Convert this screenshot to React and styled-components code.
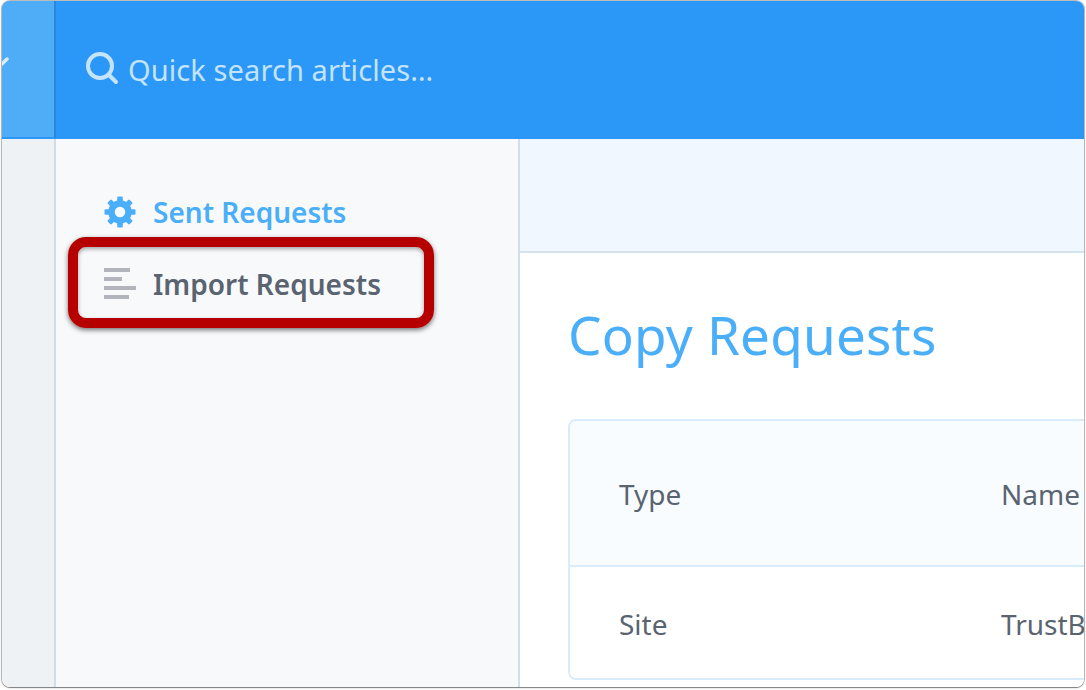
import React from "react";
import styled, { createGlobalStyle } from "styled-components";

const Global = createGlobalStyle`
  html, body { margin: 0; padding: 0; background: #ffffff; }
  body { font-family: "Noto Sans", "Open Sans", sans-serif; }
`;

const Page = styled.div`
  width: 1086px;
  height: 690px;
  padding: 1px 2px 3px 2px;
  box-sizing: border-box;
  overflow: hidden;
`;

const Window = styled.div`
  position: relative;
  height: 686px;
  border-radius: 8px;
  overflow: hidden;
  display: flex;
  flex-direction: column;
  background: #fff;
  box-shadow: 0 0 1px 1px rgba(90, 90, 90, 0.45), 0 1px 1px rgba(60, 60, 60, 0.5);
`;

const Header = styled.header`
  height: 138px;
  flex: none;
  display: flex;
  background: #2b97f6;
`;

const HeaderRail = styled.div`
  flex: none;
  width: 54px;
  box-sizing: border-box;
  background: #4facf7;
  border-right: 2px solid #2a88dc;
  border-bottom: 2px solid #2b97f6;
  overflow: hidden;
  display: flex;
  align-items: flex-start;
`;

const Chevron = styled.svg`
  margin-top: 51px;
  width: 10px;
  height: 16px;
`;

const Search = styled.div`
  display: flex;
  align-items: center;
  padding: 0 0 2px 29px;
  box-sizing: border-box;
  gap: 9px;
  height: 100%;
  color: #c4e3fd;
  font-size: 29px;
  letter-spacing: 0.1px;
  white-space: nowrap;
`;

const Body = styled.div`
  flex: 1;
  min-height: 0;
  display: flex;
`;

const Rail = styled.div`
  width: 54px;
  flex: none;
  box-sizing: border-box;
  background: #eef2f5;
  border-right: 2px solid #d3dde5;
`;

const Sidebar = styled.nav`
  width: 464px;
  flex: none;
  box-sizing: border-box;
  background: #f8f9fb;
  border-right: 2px solid #d3dfe8;
  padding: 51px 0 0 48px;
  display: flex;
  flex-direction: column;
  gap: 28px;
`;

const NavItem = styled.div`
  display: flex;
  align-items: center;
  height: 44px;
  gap: 17px;
  font-size: 28px;
  font-weight: 600;
  color: ${(p) => (p.$active ? "#4aaef8" : "#5a6470")};
`;

const Main = styled.main`
  flex: 1;
  min-width: 0;
  display: flex;
  flex-direction: column;
  background: #fff;
`;

const Band = styled.div`
  height: 114px;
  flex: none;
  box-sizing: border-box;
  background: #f0f7fe;
  border-bottom: 2px solid #d3e4f0;
`;

const Content = styled.div`
  padding: 49px 0 0 48px;
`;

const Title = styled.h1`
  margin: 0;
  height: 117px;
  font-size: 53px;
  line-height: 66px;
  font-weight: 400;
  letter-spacing: 0.2px;
  color: #4aaef8;
  white-space: nowrap;
`;

const Table = styled.div`
  width: 600px;
  height: 261px;
  box-sizing: border-box;
  border: 2px solid #d9ecfb;
  border-radius: 8px;
  overflow: hidden;
`;

const Row = styled.div`
  height: ${(p) => p.$height}px;
  box-sizing: border-box;
  display: grid;
  grid-template-columns: 382px 1fr;
  align-items: center;
  padding: ${(p) => (p.$head ? "2px" : "0")} 0 0 49px;
  background: ${(p) => (p.$head ? "#f9fcff" : "#fff")};
  border-bottom: ${(p) => (p.$head ? "2px solid #d9ecfb" : "none")};
  font-size: 28px;
  color: #5a6470;
  white-space: nowrap;
`;

const Callout = styled.div`
  position: absolute;
  left: 66px;
  top: 236px;
  width: 366px;
  height: 91px;
  box-sizing: border-box;
  border: 10px solid #b60000;
  border-radius: 18px;
  box-shadow: 0 2px 5px rgba(0, 0, 0, 0.55), inset 0 2px 4px rgba(0, 0, 0, 0.35);
`;

const Icon = styled.svg`
  flex: none;
  display: block;
`;

const TEETH = [0, 45, 90, 135, 180, 225, 270, 315];

export default function App() {
  return (
    <Page>
      <Global />
      <Window>
        <Header>
          <HeaderRail>
            <Chevron viewBox="0 0 10 16">
              <path d="M0 12 L5 7" stroke="#d8edfd" strokeWidth="3.5" strokeLinecap="round" fill="none" />
            </Chevron>
          </HeaderRail>
          <Search>
            <Icon width="34" height="34" viewBox="0 0 34 34" fill="none">
              <circle cx="15" cy="14" r="12" stroke="#c4e3fd" strokeWidth="4" />
              <path d="M24 23 L31 30" stroke="#c4e3fd" strokeWidth="4" strokeLinecap="round" />
            </Icon>
            <span>Quick search articles…</span>
          </Search>
        </Header>
        <Body>
          <Rail />
          <Sidebar>
            <NavItem $active>
              <Icon width="32" height="32" viewBox="0 0 32 32">
                <circle cx="16" cy="16" r="8.5" fill="none" stroke="#4aaef8" strokeWidth="6.5" />
                {TEETH.map((a) => (
                  <rect key={a} x="13.2" y="0.5" width="5.6" height="6" rx="1.2" fill="#4aaef8" transform={`rotate(${a} 16 16)`} />
                ))}
              </Icon>
              <span>Sent Requests</span>
            </NavItem>
            <NavItem>
              <Icon width="32" height="32" viewBox="0 0 32 32">
                <path fill="#b2b6bc" d="M0 0h26v4H0zM0 9h18v4H0zM0 18h32v4H0zM0 27h25v4H0z" />
              </Icon>
              <span>Import Requests</span>
            </NavItem>
          </Sidebar>
          <Main>
            <Band />
            <Content>
              <Title>Copy Requests</Title>
              <Table>
                <Row $head $height={146}>
                  <span>Type</span>
                  <span>Name</span>
                </Row>
                <Row $height={113}>
                  <span>Site</span>
                  <span>TrustBox</span>
                </Row>
              </Table>
            </Content>
          </Main>
        </Body>
        <Callout />
      </Window>
    </Page>
  );
}
